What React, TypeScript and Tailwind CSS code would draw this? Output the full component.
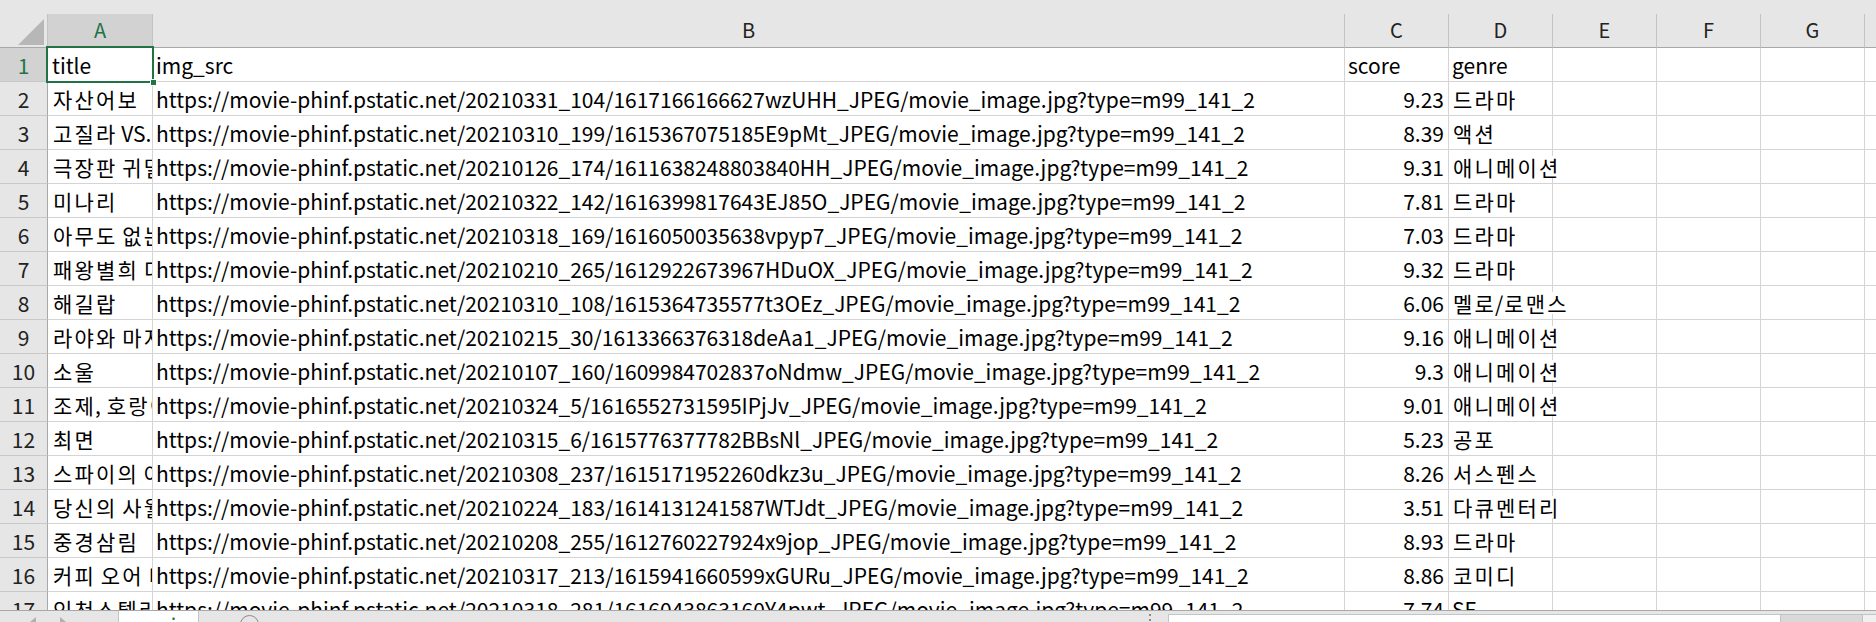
import React from "react";

const PRE = "https://movie-phinf.pstatic.net/";
const SUF = "/movie_image.jpg?type=m99_141_2";

const data: [string, string, string, string][] = [
  ["자산어보", "20210331_104/1617166166627wzUHH_JPEG", "9.23", "드라마"],
  ["고질라 VS. 콩", "20210310_199/1615367075185E9pMt_JPEG", "8.39", "액션"],
  ["극장판 귀멸의 칼날: 무한열차편", "20210126_174/1611638248803840HH_JPEG", "9.31", "애니메이션"],
  ["미나리", "20210322_142/1616399817643EJ85O_JPEG", "7.81", "드라마"],
  ["아무도 없는 곳", "20210318_169/1616050035638vpyp7_JPEG", "7.03", "드라마"],
  ["패왕별희 디 오리지널", "20210210_265/1612922673967HDuOX_JPEG", "9.32", "드라마"],
  ["해길랍", "20210310_108/1615364735577t3OEz_JPEG", "6.06", "멜로/로맨스"],
  ["라야와 마지막 드래곤", "20210215_30/1613366376318deAa1_JPEG", "9.16", "애니메이션"],
  ["소울", "20210107_160/1609984702837oNdmw_JPEG", "9.3", "애니메이션"],
  ["조제, 호랑이 그리고 물고기들", "20210324_5/1616552731595IPjJv_JPEG", "9.01", "애니메이션"],
  ["최면", "20210315_6/1615776377782BBsNl_JPEG", "5.23", "공포"],
  ["스파이의 아내", "20210308_237/1615171952260dkz3u_JPEG", "8.26", "서스펜스"],
  ["당신의 사월", "20210224_183/1614131241587WTJdt_JPEG", "3.51", "다큐멘터리"],
  ["중경삼림", "20210208_255/1612760227924x9jop_JPEG", "8.93", "드라마"],
  ["커피 오어 티", "20210317_213/1615941660599xGURu_JPEG", "8.86", "코미디"],
  ["인천스텔라", "20210318_281/1616043863160Y4pwt_JPEG", "7.74", "SF"],
];

function KText({ s }: { s: string }) {
  const parts: React.ReactNode[] = [];
  let buf = "";
  Array.from(s).forEach((ch, i) => {
    if (/[\uAC00-\uD7A3]/.test(ch)) {
      if (buf) {
        parts.push(buf);
        buf = "";
      }
      parts.push(
        <span key={i} className="inline-block w-[21.5px] text-center">
          {ch}
        </span>
      );
    } else {
      buf += ch;
    }
  });
  if (buf) parts.push(buf);
  return <>{parts}</>;
}

function ColHead({ label, w, sel }: { label: string; w: string; sel?: boolean }) {
  return (
    <div
      className={`${w} shrink-0 h-full flex items-center justify-center border-r border-b border-r-[#c4c4c4] border-b-[#a8a8a8] ${
        sel ? "bg-[#d2d2d2] text-[#217346]" : "bg-[#e6e6e6] text-[#222]"
      }`}
    >
      <span className="leading-[22px] pb-[2px]">{label}</span>
    </div>
  );
}

function Row({ n, cells, header }: { n: number; cells: [string, string, string, string]; header?: boolean }) {
  const [a, b, c, d] = cells;
  const sel = n === 1;
  return (
    <div className="flex h-[34px]">
      <div
        className={`w-[48px] shrink-0 flex items-center justify-center border-r border-b border-r-[#a8a8a8] border-b-[#c8c8c8] ${
          sel ? "bg-[#d2d2d2] text-[#217346]" : "bg-[#e6e6e6] text-[#222]"
        }`}
      >
        <span className="leading-[22px]">{n}</span>
      </div>
      <div className="w-[105px] shrink-0 flex items-center overflow-hidden border-r border-b border-[#d4d4d4] pl-[4px]">
        <span className="leading-[22px] whitespace-nowrap">
          <KText s={a} />
        </span>
      </div>
      <div className="w-[1192px] shrink-0 flex items-center overflow-hidden border-r border-b border-[#d4d4d4] pl-[3px]">
        <span className="leading-[22px] whitespace-nowrap">{b}</span>
      </div>
      <div
        className={`w-[104px] shrink-0 flex items-center border-r border-b border-[#d4d4d4] ${
          header ? "justify-start pl-[3px]" : "justify-end pr-[4px]"
        }`}
      >
        <span className="leading-[22px] whitespace-nowrap">{c}</span>
      </div>
      <div className="w-[104px] shrink-0 flex items-center border-r border-b border-[#d4d4d4] pl-[3px]">
        <span className="relative z-10 bg-white leading-[22px] whitespace-nowrap">
          <KText s={d} />
        </span>
      </div>
      <div className="w-[104px] shrink-0 border-r border-b border-[#d4d4d4]" />
      <div className="w-[104px] shrink-0 border-r border-b border-[#d4d4d4]" />
      <div className="w-[104px] shrink-0 border-r border-b border-[#d4d4d4]" />
      <div className="flex-1 border-b border-[#d4d4d4]" />
    </div>
  );
}

export default function App() {
  return (
    <div className="relative w-[1876px] h-[622px] overflow-hidden bg-white text-black text-[21px] [font-family:'Noto_Sans_CJK_KR','Noto_Sans_CJK_JP',sans-serif]">
      <div className="h-[14px] bg-[#e6e6e6]" />
      <div className="flex h-[34px] text-[20px]">
        <div className="w-[48px] shrink-0 h-full bg-[#e6e6e6] border-r border-b border-r-[#c4c4c4] border-b-[#a8a8a8] relative">
          <svg className="absolute left-[18px] top-[5px]" width="26" height="26" viewBox="0 0 26 26">
            <polygon points="26,0 26,26 0,26" fill="#b7b7b7" />
          </svg>
        </div>
        <ColHead label="A" w="w-[105px]" sel />
        <ColHead label="B" w="w-[1192px]" />
        <ColHead label="C" w="w-[104px]" />
        <ColHead label="D" w="w-[104px]" />
        <ColHead label="E" w="w-[104px]" />
        <ColHead label="F" w="w-[104px]" />
        <ColHead label="G" w="w-[104px]" />
        <div className="flex-1 bg-[#e6e6e6] border-b border-[#a8a8a8]" />
      </div>
      <div className="h-[562px] overflow-hidden">
        <Row n={1} cells={["title", "img_src", "score", "genre"]} header />
        {data.map((r, i) => (
          <Row key={i} n={i + 2} cells={[r[0], PRE + r[1] + SUF, r[2], r[3]]} />
        ))}
      </div>
      <div className="relative h-[12px] bg-[#e6e6e6] border-t border-[#a8a8a8] overflow-hidden">
        <svg className="absolute left-[28px] top-[6px]" width="10" height="10" viewBox="0 0 10 10">
          <polygon points="8,0 8,10 2,5" fill="#b0b0b0" />
        </svg>
        <svg className="absolute left-[58px] top-[6px]" width="10" height="10" viewBox="0 0 10 10">
          <polygon points="2,0 2,10 8,5" fill="#b0b0b0" />
        </svg>
        <div className="absolute left-[118px] top-0 w-[81px] h-[14px] bg-white border-l border-r border-[#c4c4c4] flex justify-center">
          <span className="leading-[22px] mt-[3px] text-[20px] text-[#217346]">movie</span>
        </div>
        <div className="absolute left-[240px] top-[4px] w-[19px] h-[19px] rounded-full border border-[#8a8a8a]" />
        <div className="absolute left-[1149px] top-[3px] w-[2px] h-[2px] bg-[#8a8a8a]" />
        <div className="absolute left-[1149px] top-[8px] w-[2px] h-[2px] bg-[#8a8a8a]" />
        <div className="absolute left-[1168px] top-[3px] w-[613px] h-[12px] bg-white border border-[#c4c4c4]" />
        <div className="absolute left-[1781px] top-[3px] w-[81px] h-[12px] bg-[#d9d9d9] border-t border-[#c4c4c4]" />
        <div className="absolute left-[1862px] top-[3px] w-[14px] h-[12px] bg-[#f0f0f0] border-l border-t border-[#c4c4c4]" />
      </div>
      <div className="absolute left-[46px] top-[46px] w-[108px] h-[37px] border-2 border-[#217346] pointer-events-none" />
      <div className="absolute left-[150px] top-[79px] w-[7px] h-[7px] bg-[#217346] border border-white" />
    </div>
  );
}
